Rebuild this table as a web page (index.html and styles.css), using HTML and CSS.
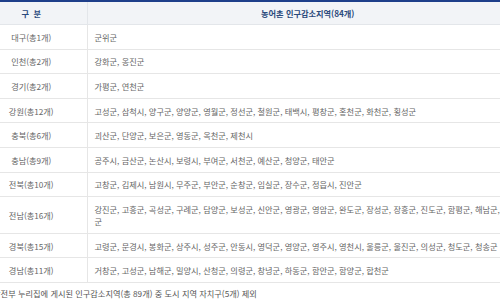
FILE: index.html
```html
<!DOCTYPE html>
<html lang="ko">
<head>
<meta charset="utf-8">
<link rel="stylesheet" href="styles.css">
</head>
<body>
<div class="page">
  <table class="region-table">
    <colgroup>
      <col class="col-area">
      <col class="col-list">
    </colgroup>
    <thead>
      <tr>
        <th class="th-area">구&nbsp;&nbsp;분</th>
        <th class="th-list">농어촌 인구감소지역(84개)</th>
      </tr>
    </thead>
    <tbody>
      <tr><td class="area">대구(총1개)</td><td class="list">군위군</td></tr>
      <tr><td class="area">인천(총2개)</td><td class="list">강화군, 옹진군</td></tr>
      <tr><td class="area">경기(총2개)</td><td class="list">가평군, 연천군</td></tr>
      <tr><td class="area">강원(총12개)</td><td class="list">고성군, 삼척시, 양구군, 양양군, 영월군, 정선군, 철원군, 태백시, 평창군, 홍천군, 화천군, 횡성군</td></tr>
      <tr><td class="area">충북(총6개)</td><td class="list">괴산군, 단양군, 보은군, 영동군, 옥천군, 제천시</td></tr>
      <tr><td class="area">충남(총9개)</td><td class="list">공주시, 금산군, 논산시, 보령시, 부여군, 서천군, 예산군, 청양군, 태안군</td></tr>
      <tr><td class="area">전북(총10개)</td><td class="list">고창군, 김제시, 남원시, 무주군, 부안군, 순창군, 임실군, 장수군, 정읍시, 진안군</td></tr>
      <tr><td class="area">전남(총16개)</td><td class="list">강진군, 고흥군, 곡성군, 구례군, 담양군, 보성군, 신안군, 영광군, 영암군, 완도군, 장성군, 장흥군, 진도군, 함평군, 해남군, 화순군</td></tr>
      <tr><td class="area">경북(총15개)</td><td class="list">고령군, 문경시, 봉화군, 상주시, 성주군, 안동시, 영덕군, 영양군, 영주시, 영천시, 울릉군, 울진군, 의성군, 청도군, 청송군</td></tr>
      <tr><td class="area">경남(총11개)</td><td class="list">거창군, 고성군, 남해군, 밀양시, 산청군, 의령군, 창녕군, 하동군, 함안군, 함양군, 합천군</td></tr>
    </tbody>
  </table>
  <p class="note">행정안전부 누리집에 게시된 인구감소지역(총 89개) 중 도시 지역 자치구(5개) 제외</p>
</div>
</body>
</html>
```

FILE: styles.css
```css
html, body {
  margin: 0;
  padding: 0;
  background: #ffffff;
  overflow: hidden;
}

body {
  font-family: "Noto Sans CJK KR", "Noto Sans", sans-serif;
  font-size: 8.2px;
  color: #666666;
}

.page {
  width: 552px;
  margin-left: -24px;
}

.region-table {
  width: 100%;
  border-collapse: collapse;
  border-top: 2px solid #1e3f8a;
  table-layout: fixed;
}

.col-area {
  width: 111px;
}

.region-table th {
  background: #f2f4f7;
  color: #2a4a7c;
  font-weight: 700;
  height: 22px;
  padding: 0 7px;
  line-height: 12px;
  border-bottom: 1px solid #e3e6ea;
}

.th-area {
  text-align: center;
  border-right: 1px solid #e3e6ea;
}

.th-list {
  text-align: center;
}

.region-table td {
  padding: 5.8px 7px;
  line-height: 12px;
  border-bottom: 1px solid #e6e6e6;
  vertical-align: middle;
}

.area {
  text-align: center;
  border-right: 1px solid #e6e6e6;
}

.region-table td.list {
  text-align: left;
  word-break: break-all;
}

.note {
  margin: 4px 0 0 2px;
  line-height: 12px;
  color: #555555;
}
```
